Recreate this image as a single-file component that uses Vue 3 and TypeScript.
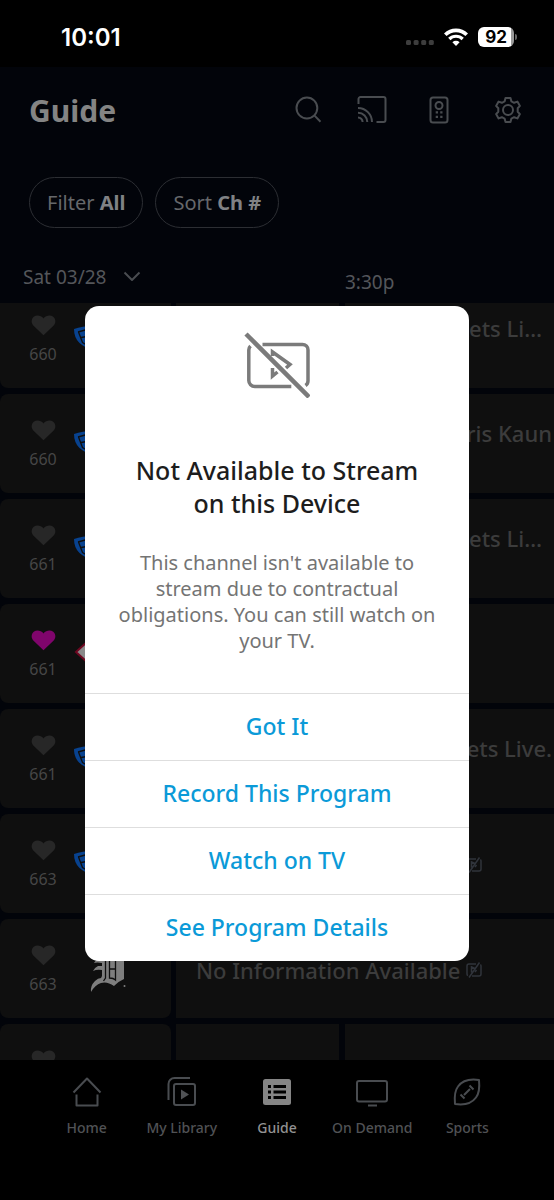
<script setup lang="ts">
interface Program {
  title: string
  kind: 'split' | 'single' | 'flush' | 'empty'
}
interface Channel {
  number?: string
  logo: 'shield' | 'diamond' | 'crest' | 'none'
  favorite?: boolean
  program: Program
}

const channels: Channel[] = [
  { number: '660', logo: 'shield', program: { title: 'Rockets Li…', kind: 'split' } },
  { number: '660', logo: 'shield', program: { title: 'Chris Kaun', kind: 'flush' } },
  { number: '661', logo: 'shield', program: { title: 'Rockets Li…', kind: 'split' } },
  { number: '661', logo: 'diamond', favorite: true, program: { title: '', kind: 'empty' } },
  { number: '661', logo: 'shield', program: { title: 'Rockets Live.', kind: 'flush' } },
  { number: '663', logo: 'shield', program: { title: '', kind: 'single' } },
  { number: '663', logo: 'crest', program: { title: 'No Information Available', kind: 'single' } },
  { logo: 'none', program: { title: '', kind: 'empty' } },
]

const tabs = ['Home', 'My Library', 'Guide', 'On Demand', 'Sports']
const actions = ['Got It', 'Record This Program', 'Watch on TV', 'See Program Details']
</script>

<template>
  <div class="screen">
    <div class="status">
      <span class="clock">10:01</span>
      <div class="status-icons">
        <svg class="signal" width="28" height="6" viewBox="0 0 28 6" fill="#3d3d3d">
          <rect x="0" y="0" width="5" height="5" rx="1.5" /><rect x="7.6" y="0" width="5" height="5" rx="1.5" />
          <rect x="15.2" y="0" width="5" height="5" rx="1.5" /><rect x="22.8" y="0" width="5" height="5" rx="1.5" />
        </svg>
        <svg class="wifi" width="24" height="18" viewBox="0 0 24 18" fill="none" stroke="#fff" stroke-width="3.7">
          <path d="M1.3 6.8a15.2 15.2 0 0 1 21.4 0" />
          <path d="M5.3 11a9.5 9.5 0 0 1 13.4 0" stroke-width="3.2" />
          <path d="M12 18l-3.6-3.7a5.1 5.1 0 0 1 7.2 0z" fill="#fff" stroke="none" />
        </svg>
        <span class="battery"><span class="level">92</span></span>
      </div>
    </div>

    <header class="top">
      <h1>Guide</h1>
      <nav class="tools">
        <button aria-label="Search">
          <svg width="28" height="28" viewBox="0 0 28 28"><circle cx="12.9" cy="12" r="10.4" /><path d="M20.3 19.4l6.2 6.3" /></svg>
        </button>
        <button aria-label="Cast">
          <svg width="30" height="28" viewBox="0 0 30 28"><path d="M1.500 8V3a2 2 0 0 1 2-2h23a2 2 0 0 1 2 2v21a2 2 0 0 1-2 2h-7M1 12A14 14 0 0 1 15 26M1 16.700A9.300 9.300 0 0 1 10.300 26M1 21.400A4.600 4.600 0 0 1 5.600 26" /></svg>
        </button>
        <button aria-label="Remote">
          <svg width="20" height="28" viewBox="0 0 20 28"><rect x="1.500" y="1.500" width="17" height="25" rx="2.500" /><circle cx="10" cy="9.500" r="3.500" /><path d="M6.700 16.300h2.300M11.200 16.300h2.300M6.700 20.800h2.300M11.200 20.800h2.300" stroke-width="2.300" /></svg>
        </button>
        <button aria-label="Settings">
          <svg width="28" height="28" viewBox="0 0 28 28"><circle cx="14" cy="14" r="5" /><path d="M11.500 2h5l.9 3.400 2.700 1.400 3.300-1.200 2.500 4.300-2.200 2.400v3.400l2.200 2.400-2.500 4.300-3.300-1.200-2.700 1.400-.9 3.400h-5l-.9-3.400-2.700-1.400-3.300 1.200-2.500-4.300 2.200-2.400v-3.400L2.100 9.900l2.500-4.300 3.300 1.200 2.700-1.400z" /></svg>
        </button>
      </nav>
    </header>

    <div class="filters">
      <button class="pill">Filter <b>All</b></button>
      <button class="pill">Sort <b>Ch #</b></button>
    </div>

    <div class="times">
      <button class="date">
        Sat 03/28
        <svg width="18" height="11" viewBox="0 0 18 11"><path d="M1.500 1.500L9 9l7.500-7.500" /></svg>
      </button>
      <span class="slot">3:30p</span>
    </div>

    <main class="guide">
      <ul class="rows">
        <li v-for="(ch, i) in channels" :key="i" class="row">
          <div class="channel">
            <div class="fav" :class="{ on: ch.favorite }">
              <svg width="25" height="21" viewBox="0 0 26 22"><path d="M13 21.300L2.600 11.300C-.3 8.300.1 4 2.800 1.900 5.800-.3 10.200.3 13 3.600 15.800.3 20.200-.3 23.200 1.900c2.700 2.100 3.100 6.400.2 9.400z" /></svg>
              <span v-if="ch.number">{{ ch.number }}</span>
            </div>
            <svg v-if="ch.logo === 'shield'" class="logo" width="44" height="26" viewBox="0 0 44 26" fill="#08428f">
              <path d="M0 5Q8 2 20 1.500v24.500C8 23 0 17 0 5z" />
              <path d="M4 8L13 5.500M4.500 8l4 10.500 5 3M7 13.500l6-1" fill="none" stroke="#0f0f0f" stroke-width="1.300" />
            </svg>
            <svg v-else-if="ch.logo === 'diamond'" class="logo" width="44" height="26" viewBox="0 0 44 26" fill="#8a8a8a" stroke="#6e0620" stroke-width="2">
              <path d="M2 13L13 3h18l11 10-11 10H13z" />
            </svg>
            <svg v-else-if="ch.logo === 'crest'" class="logo crest" width="38" height="44" viewBox="0 0 38 44" fill="#7e7e7e">
              <path d="M4 7q8-6 14-2 6-4 11-1 4-3 6-3-2 4-1 8v20q-5 2-10 7-7-5-13-3Q5 35 1 42 0 36 5 31q3-3 6-3l1-2v-6q-5-1-9 1 1-3 5-5h4v-3q-5-1-8 0 1-2 3-3h4V8Q8 6 4 7z" />
              <path d="M15.500 8v20l-2 3M19.500 8v20q4 0 6 2V10q-3-3-6-2zM19.500 19h6" fill="none" stroke="#0f0f0f" stroke-width="1.300" />
              <circle cx="34.500" cy="36" r="1" />
            </svg>
          </div>
          <div class="program" :class="ch.program.kind">
            <div v-if="ch.program.kind !== 'single'" class="earlier"></div>
            <div class="cell">
              <span class="title">{{ ch.program.title }}</span>
              <svg v-if="ch.program.kind === 'single'" width="16" height="16" viewBox="0 0 16 16" fill="none" stroke="#30343b" stroke-width="1.500">
                <path d="M10 2H3a2 2 0 0 0-2 2v8a1.500 1.500 0 0 0 1 1.500M6 14h7a2 2 0 0 0 2-2V4a2 2 0 0 0-.6-1.500M13.500.5L3 15.500M5.500 10.500V5l3.500 1.500M10.500 8L9 10" />
              </svg>
            </div>
          </div>
        </li>
      </ul>
    </main>

    <nav class="tabs">
      <a v-for="tab in tabs" :key="tab" href="#" :class="{ active: tab === 'Guide' }">
        <svg v-if="tab === 'Home'" width="32" height="32" viewBox="0 0 32 32"><path d="M2.500 16.500L16 2.500l13.500 14M5.500 18.500v11h21v-11" /></svg>
        <svg v-else-if="tab === 'My Library'" width="32" height="32" viewBox="0 0 32 32"><path d="M2.500 24V8a6 6 0 0 1 6-6H24" /><rect x="8" y="8" width="21" height="21" rx="2" /><path d="M15 13.500v10l8-5z" class="solid" /></svg>
        <svg v-else-if="tab === 'Guide'" width="32" height="32" viewBox="0 0 32 32">
          <rect x="2" y="3" width="28" height="26" rx="2.500" class="solid" />
          <path d="M7 10.500h3M7 16h3M7 21.500h3M12.500 10.500h12.500M12.500 16h12.500M12.500 21.500h12.500" class="cut" />
        </svg>
        <svg v-else-if="tab === 'On Demand'" width="32" height="32" viewBox="0 0 32 32"><rect x="1" y="5" width="30" height="20.500" rx="2" /><path d="M12 29.500h9" /></svg>
        <svg v-else width="32" height="32" viewBox="0 0 32 32"><path d="M28 4c-10-1.500-17 1-21 6.500C3.500 15 3.300 21 4 28c10 1.500 17-1 21-6.500C28.500 17 28.700 11 28 4zM13 19l6-6M18.500 9.500l4 4M9.500 18.500l4 4" /></svg>
        <span>{{ tab }}</span>
      </a>
    </nav>

    <div class="overlay">
      <section class="dialog" role="dialog" aria-modal="true" aria-labelledby="dialog-title">
        <div class="message">
          <svg width="66" height="66" viewBox="0 0 66 66" fill="none" stroke="#7b7b7b" stroke-width="3.500">
            <path d="M6.500 14a6 6 0 0 0-1.700 4v30.500a6 6 0 0 0 6 6h36.500M18.500 12.500h40a5.500 5.500 0 0 1 5.500 5.500v31a5.500 5.500 0 0 1-2.500 4.500" />
            <path d="M28.500 24v-4l17.500 12.500-4 3.500M28.500 36v8l5-4" />
            <path d="M2 2l63 63" stroke-width="4.500" />
          </svg>
          <h2 id="dialog-title">Not Available to Stream<br />on this Device</h2>
          <p>This channel isn't available to stream due to contractual obligations. You can still watch on your TV.</p>
        </div>
        <button v-for="action in actions" :key="action">{{ action }}</button>
      </section>
    </div>
  </div>
</template>

<style>
body {
  margin: 0;
  background: #000;
}
</style>

<style scoped>
.screen {
  position: relative;
  display: flex;
  flex-direction: column;
  height: 100vh;
  overflow: hidden;
  background: #02040a;
  color: #54565a;
  font-family: 'Noto Sans', 'Open Sans', sans-serif;
}
button {
  margin: 0;
  padding: 0;
  border: 0;
  background: none;
  color: inherit;
  font: inherit;
  cursor: pointer;
}
svg {
  display: block;
  flex: none;
}
.status {
  display: flex;
  flex: none;
  justify-content: space-between;
  align-items: center;
  height: 67px;
  box-sizing: border-box;
  padding: 7px 37px 0 61px;
  background: #000;
  color: #fff;
  font-family: Inter, sans-serif;
}
.clock {
  font-size: 24px;
  font-weight: 600;
}
.status-icons {
  display: flex;
  align-items: center;
  gap: 10px;
}
.signal {
  margin-top: 12px;
}
.battery {
  display: flex;
  align-items: center;
  gap: 1px;
}
.battery::after {
  content: '';
  width: 2px;
  height: 6px;
  border-radius: 0 2px 2px 0;
  background: #666;
}
.level {
  width: 36px;
  border-radius: 6px;
  background: linear-gradient(90deg, #fff 92%, #999 92%);
  color: #000;
  font-size: 17px;
  font-weight: 700;
  line-height: 20px;
  text-align: center;
}
.top {
  display: flex;
  flex: none;
  justify-content: space-between;
  align-items: center;
  height: 86px;
  padding: 0 32px 0 29px;
}
h1 {
  margin: 0;
  color: #848484;
  font-size: 30px;
  font-weight: 700;
}
.tools {
  display: grid;
  grid-template-columns: 63px 72px 65px 28px;
  align-items: center;
  justify-items: start;
}
.tools svg,
.date svg,
.tabs svg {
  fill: none;
  stroke: #494c50;
  stroke-width: 2;
  stroke-linejoin: round;
}
.filters {
  display: flex;
  flex: none;
  gap: 12px;
  padding: 24px 29px 0;
}
.pill {
  height: 51px;
  padding: 0 17px;
  border: 1px solid #2c2e33;
  border-radius: 26px;
  color: #66686b;
  font-size: 20px;
}
.pill b {
  color: #808285;
  font-weight: 700;
}
.times {
  display: grid;
  flex: none;
  grid-template-columns: 322px 1fr;
  align-items: center;
  height: 75px;
  padding-left: 23px;
  box-sizing: border-box;
  font-size: 19px;
}
.date {
  display: flex;
  align-items: center;
  gap: 17px;
  padding-top: 22px;
}
.slot {
  padding-top: 32px;
}
.guide {
  flex: 1 1 0;
  min-height: 0;
  overflow: hidden;
}
.rows {
  display: flex;
  flex-direction: column;
  gap: 6px;
  margin: -14px 0 0;
  padding: 0;
  list-style: none;
}
.row {
  display: grid;
  flex: none;
  grid-template-columns: 171px 1fr;
  gap: 5px;
  height: 99px;
}
.channel {
  display: flex;
  align-items: flex-start;
  border-radius: 8px;
  background: #0f0f0f;
}
.fav {
  display: flex;
  flex: none;
  flex-direction: column;
  align-items: center;
  gap: 6px;
  width: 72px;
  box-sizing: border-box;
  padding: 26px 0 0 14px;
  color: #464646;
  font-size: 16px;
  line-height: 24px;
}
.fav svg {
  fill: #272727;
}
.fav.on svg {
  fill: #80056c;
}
.logo {
  margin: 35px 0 0 2px;
}
.crest {
  margin: 31px 0 0 18px;
}
.program {
  display: grid;
  grid-template-columns: 163px minmax(0, 1fr);
  gap: 6px;
}
.program.single {
  grid-template-columns: minmax(0, 1fr);
}
.earlier,
.cell {
  background: #0f0f0f;
}
.cell {
  display: flex;
  justify-content: flex-end;
  box-sizing: border-box;
  padding: 23px 12px 0 0;
  overflow: hidden;
  color: #3c3c3c;
  font-size: 22px;
  font-weight: 500;
  line-height: 32px;
  white-space: nowrap;
}
.flush .cell {
  padding-right: 2px;
}
.single .cell {
  justify-content: flex-start;
  align-items: center;
  gap: 6px;
  padding: 2px 0 0 20px;
}
.single .title {
  min-width: 264px;
}
.tabs {
  display: grid;
  flex: none;
  grid-template-columns: repeat(5, 1fr);
  height: 140px;
  box-sizing: border-box;
  padding: 16px 39px 0;
  background: #000;
  font-size: 14px;
  font-weight: 500;
}
.tabs a {
  display: flex;
  flex-direction: column;
  align-items: center;
  gap: 10px;
  color: #505255;
  line-height: 20px;
  text-decoration: none;
  white-space: nowrap;
}
.tabs a.active {
  color: #929292;
}
.tabs .solid {
  fill: #505255;
  stroke: none;
}
.tabs .active .solid {
  fill: #858585;
}
.tabs .cut {
  stroke: #000;
  stroke-width: 3;
}
.overlay {
  position: absolute;
  inset: 67px 0 0;
  display: flex;
  justify-content: center;
  align-items: center;
}
.dialog {
  display: flex;
  flex-direction: column;
  width: calc(100% - 48px);
  max-width: 384px;
  overflow: hidden;
  border-radius: 14px;
  background: #fff;
}
.message {
  display: flex;
  flex-direction: column;
  align-items: center;
  padding: 26px 32px 39px;
  text-align: center;
}
h2 {
  margin: 56px 0 30px;
  color: #1d1d1d;
  font-size: 25px;
  font-weight: 500;
  line-height: 33px;
}
p {
  margin: 0;
  color: #747474;
  font-size: 20px;
  line-height: 26px;
}
.dialog button {
  height: 67px;
  padding-bottom: 2px;
  border-top: 1px solid #dedede;
  color: #0b9ad8;
  font-size: 23px;
  font-weight: 500;
}
</style>
